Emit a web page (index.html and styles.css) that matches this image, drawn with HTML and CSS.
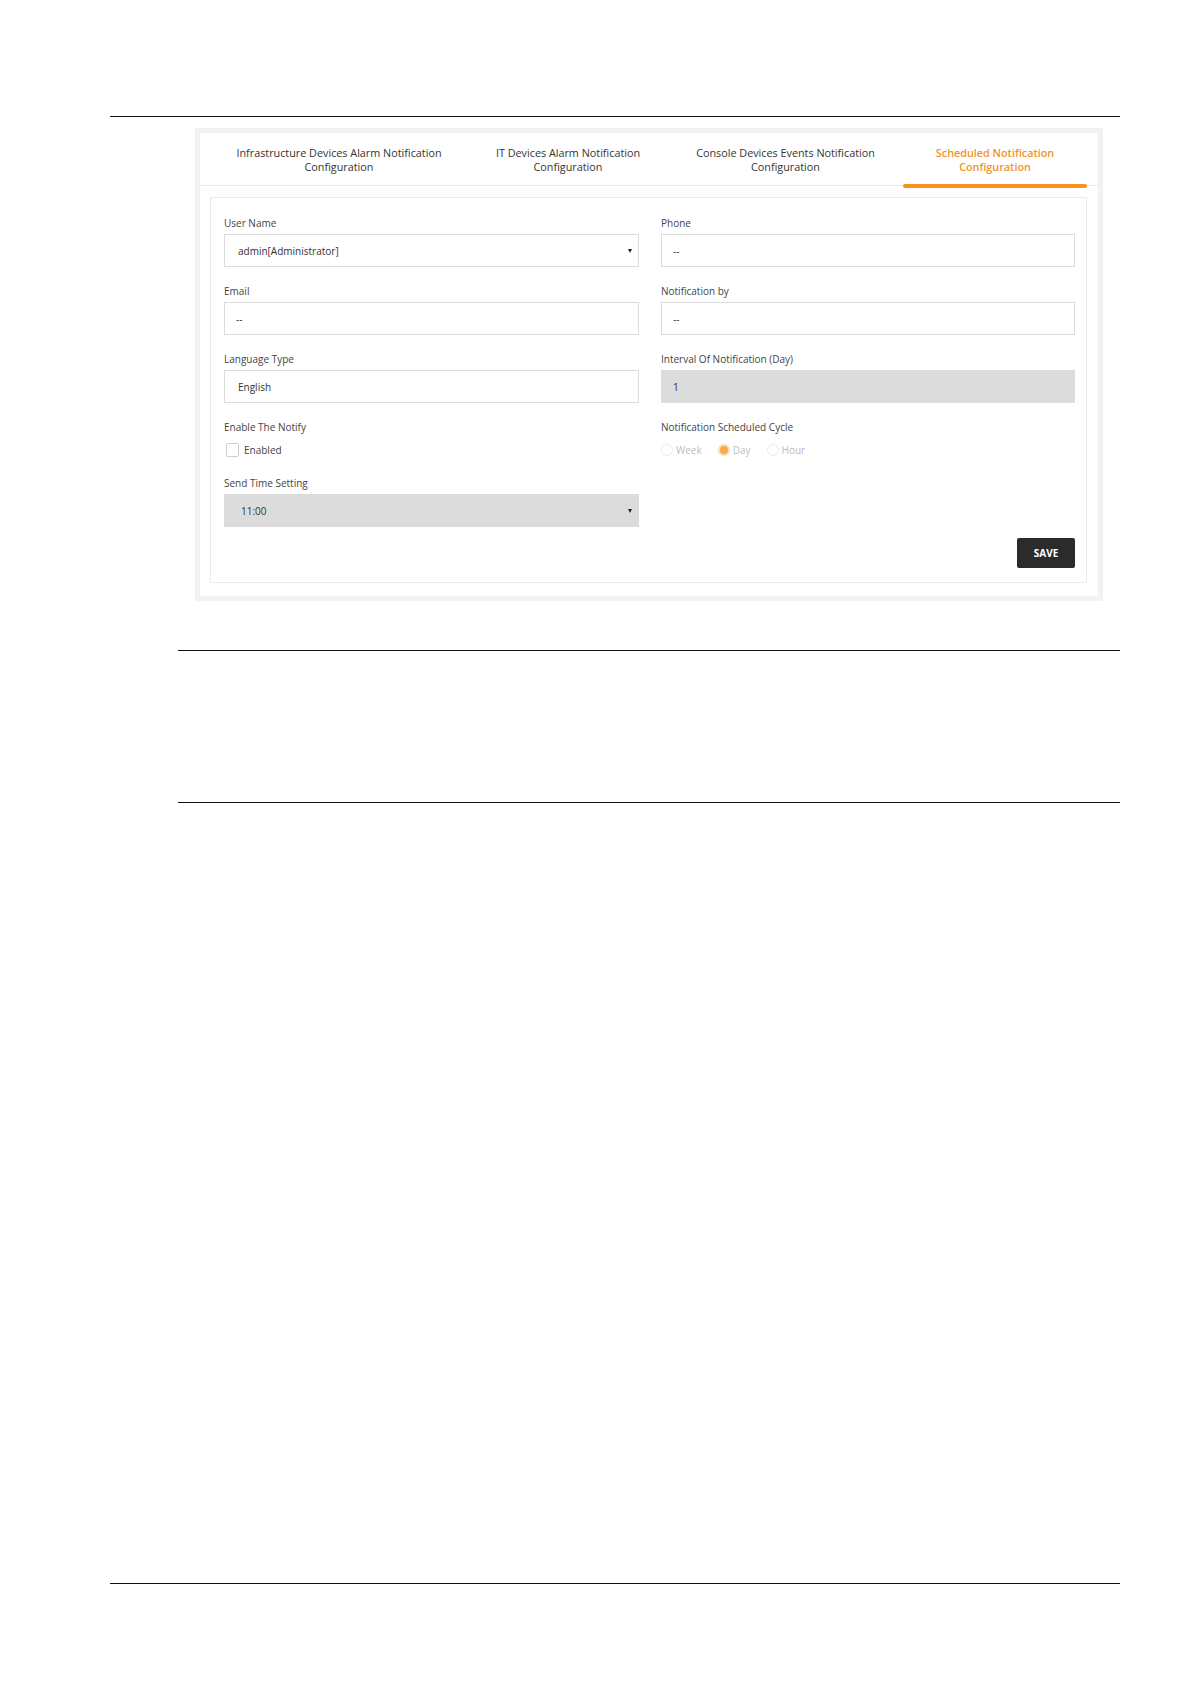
FILE: index.html
```html
<!DOCTYPE html>
<html lang="en">
<head>
<meta charset="utf-8"/>
<meta content="width=device-width, initial-scale=1.0" name="viewport"/>
<title>Scheduled Notification Configuration</title>
<link rel="stylesheet" href="styles.css">
</head>
<body>
    <div class="page">
        <div class="rule rule-top"></div>

        <!-- Screenshot of the notification settings -->
        <div class="shot">
            <div class="tabs">
                <div class="tab">Infrastructure Devices Alarm Notification<br>Configuration</div>
                <div class="tab">IT Devices Alarm Notification<br>Configuration</div>
                <div class="tab">Console Devices Events Notification<br>Configuration</div>
                <div class="tab active">Scheduled Notification<br>Configuration</div>
            </div>

            <div class="card">
                <div class="form-grid">
                    <div class="field">
                        <div class="label">User Name</div>
                        <div class="input select"><span class="value value-wide">admin[Administrator]</span><span class="caret"></span></div>
                    </div>
                    <div class="field">
                        <div class="label">Phone</div>
                        <div class="input"><span class="value">--</span></div>
                    </div>

                    <div class="field">
                        <div class="label">Email</div>
                        <div class="input"><span class="value value-narrow">--</span></div>
                    </div>
                    <div class="field">
                        <div class="label">Notification by</div>
                        <div class="input"><span class="value">--</span></div>
                    </div>

                    <div class="field">
                        <div class="label">Language Type</div>
                        <div class="input"><span class="value value-wide">English</span></div>
                    </div>
                    <div class="field">
                        <div class="label">Interval Of Notification (Day)</div>
                        <div class="input disabled"><span class="value">1</span></div>
                    </div>

                    <div class="field">
                        <div class="label">Enable The Notify</div>
                        <div class="check-row">
                            <span class="checkbox"></span>
                            <span>Enabled</span>
                        </div>
                    </div>
                    <div class="field">
                        <div class="label">Notification Scheduled Cycle</div>
                        <div class="radio-row">
                            <span class="radio-item"><span class="radio"></span>Week</span>
                            <span class="radio-item"><span class="radio checked"></span>Day</span>
                            <span class="radio-item"><span class="radio"></span>Hour</span>
                        </div>
                    </div>

                    <div class="field">
                        <div class="label">Send Time Setting</div>
                        <div class="input select disabled"><span class="value value-time">11:00</span><span class="caret"></span></div>
                    </div>
                </div>

                <div class="actions">
                    <button class="btn-save" type="button">SAVE</button>
                </div>
            </div>
        </div>

        <div class="rule rule-section rule-second"></div>
        <div class="rule rule-section rule-third"></div>
        <div class="rule rule-bottom"></div>
    </div>
</body>
</html>
```

FILE: styles.css
```css
body {
    margin: 0;
    background-color: #ffffff;
    color: #333333;
    font-family: "Open Sans", "Noto Sans", sans-serif;
}

.page {
    display: flex;
    flex-direction: column;
    padding-top: 116px;
    height: 1684px;
    box-sizing: border-box;
}

/* Page rules */
.rule {
    height: 1px;
    background-color: #111111;
}

.rule-top {
    margin-left: 110px;
    width: 1010px;
}

.rule-section {
    margin-left: 178px;
    width: 942px;
}

.rule-second {
    margin-top: 49px;
}

.rule-third {
    margin-top: 151px;
}

.rule-bottom {
    margin-left: 110px;
    width: 1010px;
    margin-top: 780px;
}

/* Screenshot frame */
.shot {
    margin-top: 11px;
    margin-left: 195px;
    width: 908px;
    box-sizing: border-box;
    border: 5px solid #f0f2f3;
    background-color: #ffffff;
}

/* Tabs */
.tabs {
    display: grid;
    grid-template-columns: 258px 200px 235px 184px;
    padding-left: 10px;
    border-bottom: 1px solid #e6e8e9;
}

.tab {
    position: relative;
    padding: 13px 0 11px;
    text-align: center;
    font-size: 10.8px;
    line-height: 14px;
    color: #333333;
    white-space: nowrap;
}

.tab.active {
    color: #f39325;
    font-weight: 600;
}

.tab.active::after {
    content: "";
    position: absolute;
    left: 0;
    right: 0;
    bottom: -3px;
    height: 4px;
    border-radius: 2px;
    background-color: #f7921e;
}

/* Form card */
.card {
    margin: 11px 11px 13px 10px;
    padding: 18px 11px 14px 13px;
    border: 1px solid #ececec;
}

.form-grid {
    display: grid;
    grid-template-columns: 415px 414px;
    column-gap: 22px;
    row-gap: 17px;
}

.label {
    font-size: 10px;
    line-height: 14px;
    color: #444444;
    margin-bottom: 4px;
}

.input {
    display: flex;
    align-items: center;
    justify-content: space-between;
    height: 33px;
    box-sizing: border-box;
    border: 1px solid #dcdcdc;
    padding: 0 6px 0 11px;
    font-size: 10px;
    color: #333333;
    background-color: #ffffff;
}

.input.disabled {
    background-color: #dcdcdc;
    border-color: #dcdcdc;
}

.value-wide {
    padding-left: 2px;
}

.value-time {
    padding-left: 5px;
}

.caret {
    width: 0;
    height: 0;
    border-left: 2px solid transparent;
    border-right: 2px solid transparent;
    border-top: 4px solid #222222;
}

/* Checkbox and radios */
.check-row {
    display: flex;
    align-items: center;
    gap: 5px;
    height: 18px;
    margin-top: 7px;
    padding-left: 2px;
    font-size: 10px;
    color: #444444;
}

.checkbox {
    width: 11px;
    height: 12px;
    border: 1px solid #cfcfcf;
    border-radius: 2px;
}

.radio-row {
    display: flex;
    align-items: center;
    height: 18px;
    margin-top: 7px;
    font-size: 10px;
    color: #bdbdbd;
}

.radio-item {
    display: flex;
    align-items: center;
    gap: 3px;
    margin-right: 16px;
}

.radio {
    width: 10px;
    height: 10px;
    border: 1px solid #ececec;
    border-radius: 50%;
    background-color: #ffffff;
}

.radio.checked {
    border: 2px solid #fcdcb4;
    width: 8px;
    height: 8px;
    background-color: #f8a94a;
}

/* Save button */
.actions {
    display: flex;
    justify-content: flex-end;
    margin-top: 11px;
}

.btn-save {
    width: 58px;
    height: 30px;
    border: none;
    border-radius: 2px;
    background-color: #2b2b2b;
    color: #ffffff;
    font-family: "Open Sans", "Noto Sans", sans-serif;
    font-size: 10px;
    font-weight: 700;
}
```
